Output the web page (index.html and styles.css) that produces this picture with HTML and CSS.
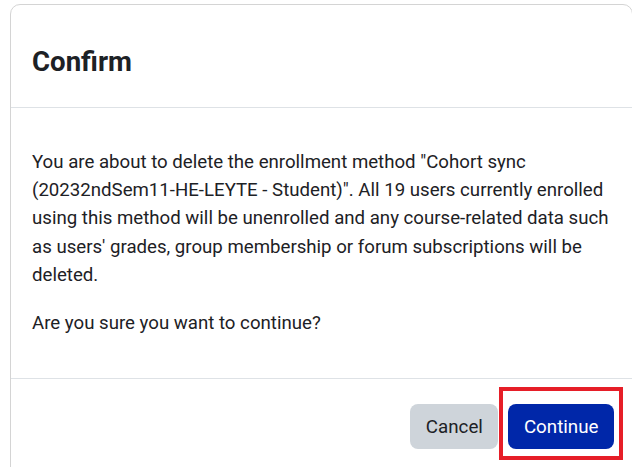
FILE: index.html
```html
<!DOCTYPE html>
<html lang="en">
<head>
<meta charset="utf-8">
<title>Confirm</title>
<link rel="stylesheet" href="styles.css">
</head>
<body>
<div class="modal">
  <div class="modal-header">
    <h5 class="modal-title">Confirm</h5>
  </div>
  <div class="modal-body">
    <p>You are about to delete the enrollment method "Cohort sync (20232ndSem11-HE-LEYTE - Student)". All 19 users currently enrolled using this method will be unenrolled and any course-related data such as users' grades, group membership or forum subscriptions will be deleted.</p>
    <p>Are you sure you want to continue?</p>
  </div>
  <div class="modal-footer">
    <button class="btn btn-secondary" type="button">Cancel</button>
    <span class="highlight-wrap">
      <button class="btn btn-primary" type="button">Continue</button>
      <span class="highlight-box"></span>
    </span>
  </div>
</div>
</body>
</html>
```
FILE: styles.css
```css
html, body {
  margin: 0;
  padding: 0;
  background: #ffffff;
}
body {
  font-family: Roboto, "Liberation Sans", Arial, sans-serif;
  color: #1d2125;
  overflow: hidden;
}
.modal {
  box-sizing: border-box;
  margin: 4px 0 0 10px;
  width: 623px;
  border: 1px solid #d4d4d4;
  border-radius: 10px;
  background: #fff;
}
.modal-header {
  padding: 39.5px 22px 29.5px 21px;
  border-bottom: 1px solid #dee2e6;
}
.modal-title {
  margin: 0;
  font-size: 27.6px;
  line-height: 1.2;
  font-weight: 700;
  color: #1d2125;
}
.modal-body {
  padding: 20.5px 6px 21px 21px;
  font-size: 18.65px;
  line-height: 1.51;
}
.modal-body p {
  margin: 19.5px 0 20px;
}
.modal-footer {
  display: flex;
  justify-content: flex-end;
  align-items: center;
  gap: 10px;
  padding: 25px 18px 40px;
  border-top: 1px solid #dee2e6;
}
.btn {
  font-family: Roboto, "Liberation Sans", Arial, sans-serif;
  font-size: 18.75px;
  line-height: 28px;
  padding: 8.5px 15.5px;
  border: none;
  border-radius: 8px;
  cursor: pointer;
}
.btn-secondary {
  background: #ced4da;
  color: #1d2125;
}
.btn-primary {
  background: #0027a9;
  color: #ffffff;
}
.highlight-wrap {
  position: relative;
  display: inline-flex;
}
.highlight-box {
  position: absolute;
  left: -9px;
  right: -9px;
  top: -17px;
  bottom: -11px;
  border: 4px solid #e61e28;
  pointer-events: none;
}
```
